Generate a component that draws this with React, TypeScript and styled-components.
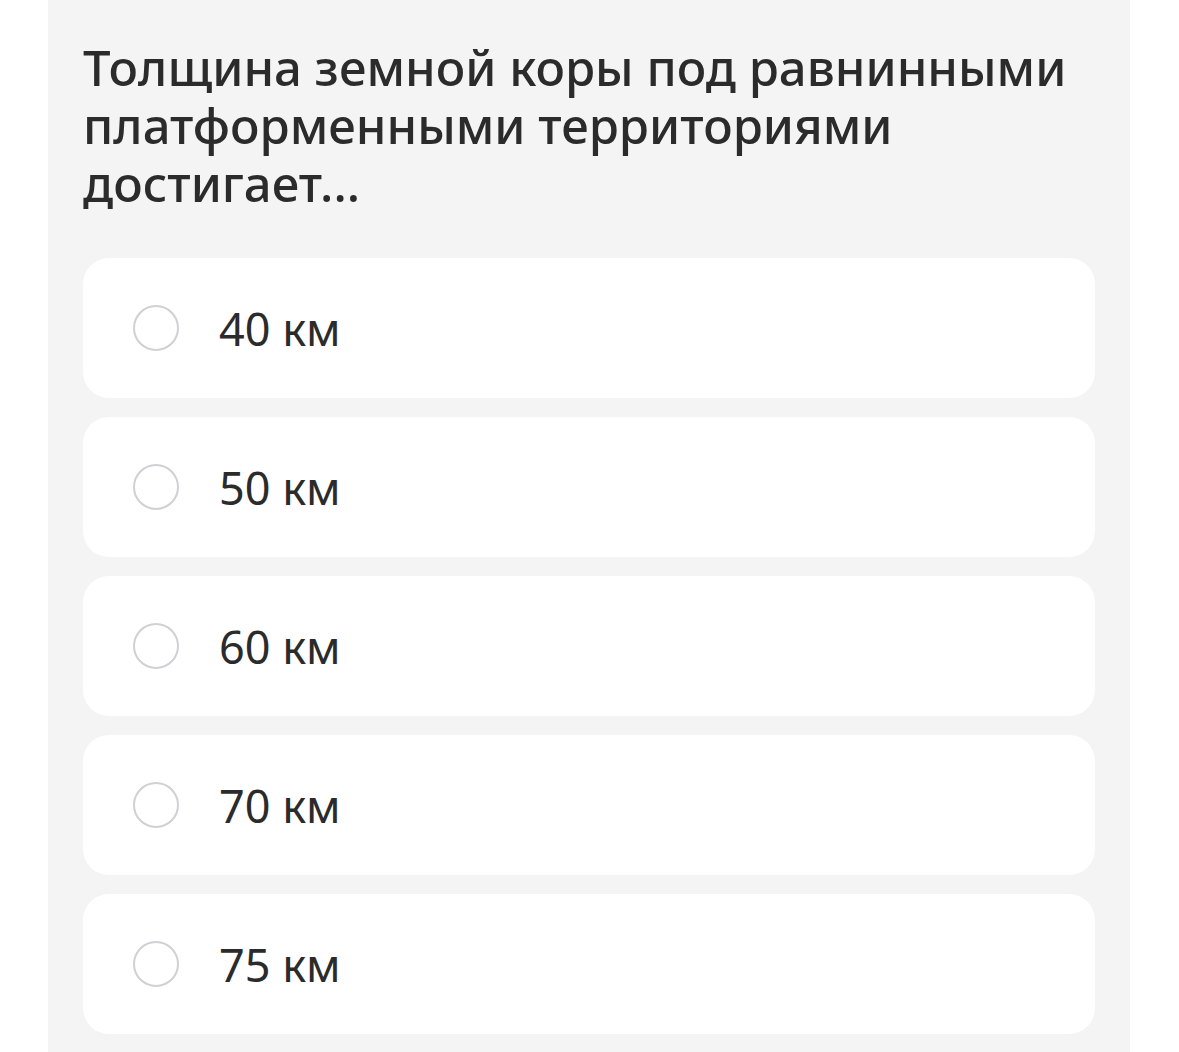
import React from "react";
import styled, { createGlobalStyle } from "styled-components";

const Global = createGlobalStyle`
  html, body { margin: 0; padding: 0; background: #ffffff; }
  body { font-family: "Noto Sans", "Open Sans", sans-serif; color: #2b2b2b; }
`;

const Page = styled.div`
  padding-left: 48px;
  width: 1082px;
`;

const Panel = styled.section`
  background: #f4f4f4;
  padding: 38px 35px 18px;
  min-height: 1052px;
  box-sizing: border-box;
`;

const Title = styled.h1`
  margin: 0 0 46px;
  font-size: 49px;
  line-height: 58px;
  font-weight: 500;
  color: #2b2b2b;
  letter-spacing: 0;
`;

const Options = styled.div`
  display: flex;
  flex-direction: column;
  gap: 19px;
`;

const Option = styled.label`
  display: flex;
  align-items: center;
  gap: 40px;
  height: 140px;
  padding-left: 50px;
  background: #ffffff;
  border-radius: 26px;
  box-sizing: border-box;
  cursor: pointer;
`;

const Radio = styled.span`
  width: 46px;
  height: 46px;
  border-radius: 50%;
  border: 2px solid #d0d0d5;
  box-sizing: border-box;
  flex: none;
`;

const OptionText = styled.span`
  font-size: 45px;
  font-weight: 400;
  color: #2b2b2b;
`;

const answers = ["40 км", "50 км", "60 км", "70 км", "75 км"];

export default function App() {
  return (
    <>
      <Global />
      <Page>
        <Panel>
          <Title>
            Толщина земной коры под равнинными платформенными территориями
            достигает...
          </Title>
          <Options>
            {answers.map((a) => (
              <Option key={a}>
                <Radio />
                <OptionText>{a}</OptionText>
              </Option>
            ))}
          </Options>
        </Panel>
      </Page>
    </>
  );
}
